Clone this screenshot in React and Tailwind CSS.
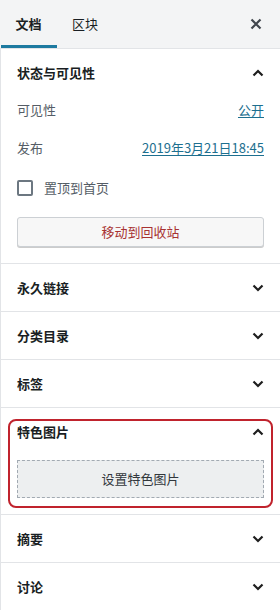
import React from "react";

const font = { fontFamily: '"Noto Sans CJK SC", "Noto Sans", sans-serif' };

function ChevronDown() {
  return (
    <svg width="14" height="14" viewBox="0 0 14 14" fill="none">
      <path d="M2.5 4.5 L7 9 L11.5 4.5" stroke="#1e1e1e" strokeWidth="2.2" />
    </svg>
  );
}
function ChevronUp() {
  return (
    <svg width="14" height="14" viewBox="0 0 14 14" fill="none">
      <path d="M2.5 9.5 L7 5 L11.5 9.5" stroke="#1e1e1e" strokeWidth="2.2" />
    </svg>
  );
}

function Collapsed({ title }) {
  return (
    <div className="h-[48px] border-b border-[#e2e4e7] px-4 flex items-center justify-between">
      <span className="text-[13px] font-bold text-[#191e23]">{title}</span>
      <span className="mr-[-1px]"><ChevronDown /></span>
    </div>
  );
}

export default function App() {
  return (
    <div className="w-[280px] h-[610px] bg-white overflow-hidden" style={font}>
      <div className="h-[49px] bg-[#f3f4f5] border-b border-[#e2e4e7] flex items-stretch">
        <div className="w-[57px] relative flex items-center justify-center text-[13px] text-[#191e23]">
          <span className="font-semibold">文档</span>
          <div className="absolute left-[1px] right-0 bottom-0 h-[3px] bg-[#1d7aa0]" />
        </div>
        <div className="w-[56px] flex items-center justify-center text-[13px] text-[#191e23]">区块</div>
        <div className="flex-1" />
        <div className="w-[44px] flex items-center justify-center pr-[4px]">
          <svg width="12" height="12" viewBox="0 0 12 12">
            <path d="M1.5 1.5 L10.5 10.5 M10.5 1.5 L1.5 10.5" stroke="#40464d" strokeWidth="2.2" />
          </svg>
        </div>
      </div>
      <div className="border-l border-[#e2e4e7]">
        <div className="border-b border-[#e2e4e7] px-4 pb-4">
          <div className="h-[48px] flex items-center justify-between">
            <span className="text-[13px] font-bold text-[#191e23]">状态与可见性</span>
            <span className="mr-[-1px]"><ChevronUp /></span>
          </div>
          <div className="h-[26px] flex items-center justify-between text-[13px]">
            <span className="text-[#555d66]">可见性</span>
            <span className="text-[#1d6f8f] underline underline-offset-2">公开</span>
          </div>
          <div className="h-[26px] mt-3 flex items-center justify-between text-[13px]">
            <span className="text-[#555d66]">发布</span>
            <span className="text-[#1d6f8f] underline underline-offset-2">2019年3月21日18:45</span>
          </div>
          <div className="h-[26px] mt-[14px] flex items-center gap-[11px] text-[13px]">
            <span className="w-[16px] h-[16px] border-2 border-[#6c7781] rounded-[2px]" />
            <span className="text-[#555d66]">置顶到首页</span>
          </div>
          <div className="mt-4 h-[30px] border border-[#ccd0d4] rounded-[3px] bg-[#f7f7f7] shadow-[0_1px_0_#ccc] flex items-center justify-center text-[13px] text-[#a83232]">
            移动到回收站
          </div>
        </div>
        <Collapsed title="永久链接" />
        <Collapsed title="分类目录" />
        <Collapsed title="标签" />
        <div className="border-b border-[#e2e4e7] px-4 pb-4 relative">
          <div className="h-[48px] flex items-center justify-between">
            <span className="text-[13px] font-bold text-[#191e23]">特色图片</span>
            <span className="mr-[-1px]"><ChevronUp /></span>
          </div>
          <div className="mt-[4px] h-[38px] border border-dashed border-[#a2aab2] bg-[#edeff0] flex items-center justify-center text-[13px] text-[#32373c]">
            设置特色图片
          </div>
          <div className="absolute left-[7px] right-[7px] top-[11px] bottom-[6px] border-2 border-[#c0232d] rounded-[8px] pointer-events-none" />
        </div>
        <Collapsed title="摘要" />
        <Collapsed title="讨论" />
      </div>
    </div>
  );
}
